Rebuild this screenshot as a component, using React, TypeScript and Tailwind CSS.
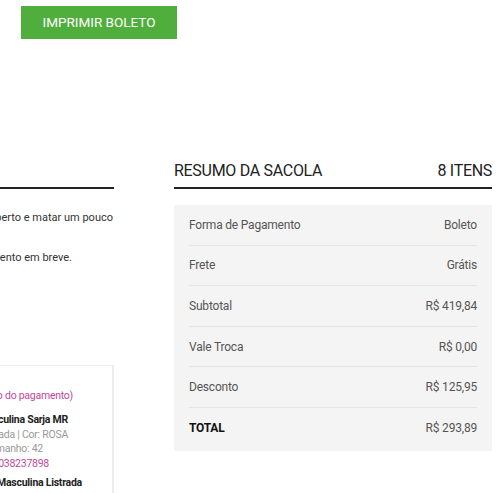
const summary = [
  { label: "Forma de Pagamento", value: "Boleto" },
  { label: "Frete", value: "Grátis" },
  { label: "Subtotal", value: "R$ 419,84" },
  { label: "Vale Troca", value: "R$ 0,00" },
  { label: "Desconto", value: "R$ 125,95" },
  { label: "TOTAL", value: "R$ 293,89", strong: true },
];

function Line({ children, className }: { children: React.ReactNode; className: string }) {
  // column is cropped on the left, so lines hang off to the start side
  return <div className={`flex justify-end whitespace-nowrap ${className}`}>{children}</div>;
}

export default function App() {
  return (
    <div className="w-[500px] h-[493px] overflow-hidden bg-white font-['Roboto',sans-serif]">
      <button className="ml-[21px] mt-[6px] w-[156px] h-[33px] bg-[#4fae3c] text-white text-[13.5px] uppercase">
        Imprimir Boleto
      </button>

      <div className="mt-[122px] flex gap-[60px]">
        <div className="w-[114px] shrink-0 overflow-hidden">
          <div className="h-[28px] border-b-2 border-[#222]" />
          <div className="mt-[19px] text-[11px] leading-[20px] text-[#333]">
            <Line className="pr-[1px]">
              Agora é só imprimir o boleto, pagar na agência mais perto e matar um pouco
            </Line>
            <Line className="pr-[114px]">da ansiedade.</Line>
            <Line className="pr-[42px]">Você receberá a confirmação do pagamento em breve.</Line>
          </div>

          <div className="mt-[97px] h-[200px] border-t border-r-2 border-[#ececec] pt-[22px] text-[10.5px] tracking-[-0.25px]">
            <Line className="pr-[39px] leading-[16px] text-[#c2479b]">
              Status: Aguardando (confirmação do pagamento)
            </Line>
            <div className="mt-[9px] leading-[14.5px]">
              <Line className="pr-[44px] font-bold text-[#222]">Bermuda Masculina Sarja MR</Line>
              <Line className="pr-[44px] text-[#999]">Ref: Bordada | Cor: ROSA</Line>
              <Line className="pr-[69px] text-[#999]">Tamanho: 42</Line>
              <Line className="pr-[63px] text-[#c2479b]">Cód: 1038237898</Line>
            </div>
            <Line className="mt-[5px] pr-[30px] font-bold leading-[14.5px] text-[#222]">
              Camisa Masculina Listrada
            </Line>
          </div>
        </div>

        <div className="w-[318px] shrink-0">
          <div className="flex justify-between h-[28px] border-b-2 border-[#222] text-[16px] leading-[20px] tracking-[-0.3px] text-[#222] uppercase">
            <span>Resumo da Sacola</span>
            <span>8 itens</span>
          </div>
          <div className="mt-[16px] bg-[#f5f4f4] px-[15px] pb-[2px]">
            {summary.map((row, i) => (
              <div
                key={row.label}
                className={`flex h-[40.6px] items-center justify-between text-[12px] tracking-[-0.2px] ${
                  i < summary.length - 1 ? "border-b border-[#e5e4e4]" : ""
                }`}
              >
                <span className={row.strong ? "font-bold text-[#111]" : "text-[#555]"}>{row.label}</span>
                <span className="text-[#555]">{row.value}</span>
              </div>
            ))}
          </div>
        </div>
      </div>
    </div>
  );
}
